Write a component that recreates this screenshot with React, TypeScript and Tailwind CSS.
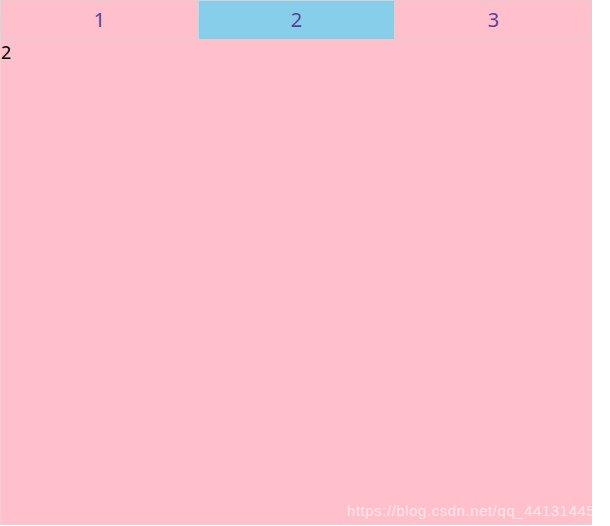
import { useState } from "react";

const tabs = ["1", "2", "3"];

export default function App() {
  const [active, setActive] = useState(1);

  return (
    <div className="relative w-[610px] h-[526px] bg-white overflow-hidden font-['Noto_Sans','Liberation_Sans',sans-serif]">
      <div className="w-[592px] h-[525px] bg-[#ffc0cb] border-l border-b border-[#e8d0d4]">
        {/* Tabs */}
        <div className="flex h-10">
          {tabs.map((t, i) => (
            <button
              key={t}
              onClick={() => setActive(i)}
              className={`flex-1 border border-[#e0cdd0] text-[20px] text-[#5b3e9e] ${
                active === i ? "bg-[#87ceeb]" : "bg-[#ffc0cb]"
              }`}
            >
              {t}
            </button>
          ))}
        </div>

        {/* Content */}
        <div className="text-[18px] leading-6 text-black">{tabs[active]}</div>
      </div>

      {/* Watermark */}
      <div className="absolute left-[347px] top-[500px] text-[15px] text-white/60 font-['Liberation_Sans',sans-serif] tracking-[0.55px]">
        https://blog.csdn.net/qq_44131445
      </div>
    </div>
  );
}
